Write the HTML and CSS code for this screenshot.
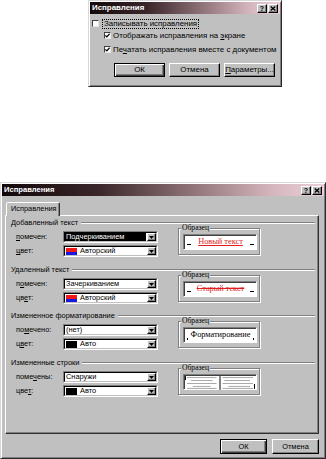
FILE: index.html
```html
<!DOCTYPE html>
<html lang="ru">
<head>
<meta charset="utf-8">
<title>Исправления</title>
<link rel="stylesheet" href="styles.css">
</head>
<body>
<div class="page">
  <section class="dlg dlg-small">
    <div class="titlebar">
      <span class="title">Исправления</span>
      <span class="tb-btns">
        <span class="tb-btn">?</span>
        <span class="tb-btn"><svg width="6" height="5" viewBox="0 0 6 5"><path d="M0.7 0.5L5.3 4.5M5.3 0.5L0.7 4.5" stroke="#000" stroke-width="1.3"/></svg></span>
      </span>
    </div>
    <div class="small-body">
      <div class="chk-row r1"><span class="chk"></span><span class="focus">Записывать исправления</span></div>
      <div class="chk-row r2"><span class="chk"><svg width="5" height="5" viewBox="0 0 5 5"><path d="M0.4 2.4L1.9 3.9L4.6 0.8" stroke="#000" stroke-width="1.3" fill="none"/></svg></span><span>Отображать исправления на <u>э</u>кране</span></div>
      <div class="chk-row r3"><span class="chk"><svg width="5" height="5" viewBox="0 0 5 5"><path d="M0.4 2.4L1.9 3.9L4.6 0.8" stroke="#000" stroke-width="1.3" fill="none"/></svg></span><span>Пе<u>ч</u>атать исправления вместе с документом</span></div>
      <div class="btn-row">
        <span class="btn btn-default">ОК</span>
        <span class="btn">Отмена</span>
        <span class="btn"><u>П</u>араметры...</span>
      </div>
    </div>
  </section>

  <section class="dlg dlg-big">
    <div class="titlebar">
      <span class="title">Исправления</span>
      <span class="tb-btns">
        <span class="tb-btn">?</span>
        <span class="tb-btn"><svg width="6" height="5" viewBox="0 0 6 5"><path d="M0.7 0.5L5.3 4.5M5.3 0.5L0.7 4.5" stroke="#000" stroke-width="1.3"/></svg></span>
      </span>
    </div>
    <div class="tabs"><span class="tab">Исправления</span></div>
    <div class="panel">
      <div class="sec s1">
        <div class="sec-head"><span>Добавленный текст</span><i class="etch"></i></div>
        <div class="sec-body">
          <div class="fields">
            <div class="frow"><span class="flabel"><u>п</u>омечен:</span>
              <div class="combo"><div class="combo-in"><span class="cval sel">Подчеркиванием</span><span class="cbtn"><svg width="5" height="3" viewBox="0 0 5 3"><path d="M0 0H5L2.5 3Z"/></svg></span></div></div>
            </div>
            <div class="frow"><span class="flabel"><u>ц</u>вет:</span>
              <div class="combo"><div class="combo-in"><span class="cval"><i class="sw sw-rb"></i>Авторский</span><span class="cbtn"><svg width="5" height="3" viewBox="0 0 5 3"><path d="M0 0H5L2.5 3Z"/></svg></span></div></div>
            </div>
          </div>
          <div class="sample">
            <span class="sample-label">Образец</span>
            <div class="sbox"><i class="mk"></i><span class="st st-new">Новый текст</span><i class="mk"></i></div>
          </div>
        </div>
      </div>

      <div class="sec s2">
        <div class="sec-head"><span>Удаленный текст</span><i class="etch"></i></div>
        <div class="sec-body">
          <div class="fields">
            <div class="frow"><span class="flabel">п<u>о</u>мечен:</span>
              <div class="combo"><div class="combo-in"><span class="cval">Зачеркиванием</span><span class="cbtn"><svg width="5" height="3" viewBox="0 0 5 3"><path d="M0 0H5L2.5 3Z"/></svg></span></div></div>
            </div>
            <div class="frow"><span class="flabel">цв<u>е</u>т:</span>
              <div class="combo"><div class="combo-in"><span class="cval"><i class="sw sw-rb"></i>Авторский</span><span class="cbtn"><svg width="5" height="3" viewBox="0 0 5 3"><path d="M0 0H5L2.5 3Z"/></svg></span></div></div>
            </div>
          </div>
          <div class="sample">
            <span class="sample-label">Образец</span>
            <div class="sbox"><i class="mk"></i><span class="st st-old">Старый текст</span><i class="mk"></i></div>
          </div>
        </div>
      </div>

      <div class="sec s3">
        <div class="sec-head"><span>Измененное форматирование</span><i class="etch"></i></div>
        <div class="sec-body">
          <div class="fields">
            <div class="frow"><span class="flabel">по<u>м</u>ечено:</span>
              <div class="combo"><div class="combo-in"><span class="cval">(нет)</span><span class="cbtn"><svg width="5" height="3" viewBox="0 0 5 3"><path d="M0 0H5L2.5 3Z"/></svg></span></div></div>
            </div>
            <div class="frow"><span class="flabel">ц<u>в</u>ет:</span>
              <div class="combo"><div class="combo-in"><span class="cval"><i class="sw sw-k"></i>Авто</span><span class="cbtn"><svg width="5" height="3" viewBox="0 0 5 3"><path d="M0 0H5L2.5 3Z"/></svg></span></div></div>
            </div>
          </div>
          <div class="sample">
            <span class="sample-label">Образец</span>
            <div class="sbox"><i class="dot"></i><span class="st st-fmt">Форматирование</span><i class="dot"></i></div>
          </div>
        </div>
      </div>

      <div class="sec s4">
        <div class="sec-head"><span>Измененные строки</span><i class="etch"></i></div>
        <div class="sec-body">
          <div class="fields">
            <div class="frow"><span class="flabel">поме<u>ч</u>ены:</span>
              <div class="combo"><div class="combo-in"><span class="cval">Снаружи</span><span class="cbtn"><svg width="5" height="3" viewBox="0 0 5 3"><path d="M0 0H5L2.5 3Z"/></svg></span></div></div>
            </div>
            <div class="frow"><span class="flabel">цве<u>т</u>:</span>
              <div class="combo"><div class="combo-in"><span class="cval"><i class="sw sw-k"></i>Авто</span><span class="cbtn"><svg width="5" height="3" viewBox="0 0 5 3"><path d="M0 0H5L2.5 3Z"/></svg></span></div></div>
            </div>
          </div>
          <div class="sample">
            <span class="sample-label">Образец</span>
            <div class="sbox sbox-lines">
              <svg width="72" height="14" viewBox="0 0 72 14">
                <g stroke="#a8a8a8" stroke-width="1">
                  <path d="M2 1.5H32M6 4.5H28M2 7.5H32M8 10.5H26M2 12.5H32"/>
                  <path d="M38 1.5H69M40 4.5H66M38 7.5H69M44 10.5H66M38 12.5H69"/>
                </g>
                <path d="M35.5 0V14" stroke="#000" stroke-width="1"/>
                <path d="M0.5 0V4" stroke="#000" stroke-width="1"/>
                <path d="M70.5 8V13" stroke="#000" stroke-width="1"/>
              </svg>
            </div>
          </div>
        </div>
      </div>
    </div>
    <div class="dlg-btns">
      <span class="btn btn-default">ОК</span>
      <span class="btn">Отмена</span>
    </div>
  </section>
</div>
</body>
</html>
```
FILE: styles.css
```css
* { box-sizing: border-box; }
html, body { margin: 0; padding: 0; background: #fff; }
body {
  width: 326px;
  height: 459px;
  overflow: hidden;
  font-family: "Liberation Sans", Arial, sans-serif;
  font-size: 7.4px;
  line-height: 1;
  color: #000;
}
u { text-decoration: underline; text-underline-offset: 1px; }
i { display: block; font-style: normal; }

.page { display: flex; flex-direction: column; align-items: flex-start; }

.dlg {
  background: #c0c0c0;
  border: 1px solid;
  border-color: #d8d8d8 #282828 #282828 #d8d8d8;
  box-shadow: inset 1px 1px 0 #fff, inset -1px -1px 0 #808080;
  padding: 1px;
  display: flex;
  flex-direction: column;
}
.dlg-small { margin-left: 88px; width: 194px; height: 87px; font-size: 7.9px; }
.dlg-big { margin-top: 95px; width: 326px; height: 277px; }

.titlebar {
  flex: none;
  height: 12px;
  display: flex;
  align-items: center;
  justify-content: space-between;
  padding: 0 2px 0 2px;
  background: linear-gradient(90deg, #120809 0%, #3a262a 30%, #8c7076 58%, #d6b6be 84%, #ecd0d7 100%);
}
.title { color: #fff; font-weight: bold; font-size: 7.6px; }
.dlg-small .title { font-size: 7.9px; }
.tb-btns { display: flex; gap: 1px; }
.tb-btn {
  width: 10px;
  height: 9px;
  background: #c0c0c0;
  border: 1px solid;
  border-color: #fff #000 #000 #fff;
  box-shadow: inset -1px -1px 0 #808080;
  display: flex;
  align-items: center;
  justify-content: center;
  font-weight: bold;
  font-size: 7px;
}

/* small dialog */
.small-body { display: flex; flex-direction: column; padding-left: 2px; }
.chk-row { display: flex; align-items: center; height: 9px; gap: 3px; }
.r1 { margin-top: 5px; }
.r2 { margin-top: 3px; padding-left: 12px; gap: 2px; }
.r3 { margin-top: 5px; padding-left: 12px; gap: 2px; }
.chk {
  flex: none;
  width: 7px;
  height: 7px;
  background: #fff;
  border: 1px solid;
  border-color: #404040 #e8e8e8 #e8e8e8 #404040;
  display: flex;
  align-items: center;
  justify-content: center;
}
.focus {
  display: flex;
  align-items: center;
  height: 10px;
  padding: 0 1px;
  border: 1px dotted #000;
}

.btn-row { display: flex; gap: 4px; margin-top: 9px; padding-left: 22px; }
.btn {
  width: 51px;
  height: 14px;
  background: #c0c0c0;
  border: 1px solid;
  border-color: #fff #000 #000 #fff;
  box-shadow: inset -1px -1px 0 #808080;
  display: flex;
  align-items: center;
  justify-content: center;
}
.btn-default {
  border-color: #000;
  box-shadow: inset 1px 1px 0 #fff, inset -1px -1px 0 #404040, inset -2px -2px 0 #808080;
}

/* big dialog */
.tabs { display: flex; margin: 6px 0 0 4px; }
.tab {
  position: relative;
  z-index: 1;
  height: 14px;
  width: 54px;
  margin-bottom: -1px;
  background: #c0c0c0;
  border: 1px solid;
  border-bottom: none;
  border-color: #fff #303030 transparent #fff;
  border-radius: 2px 2px 0 0;
  box-shadow: inset -1px 0 0 #808080;
  padding: 0 0 1px 4px;
  display: flex;
  align-items: center;
}
.panel {
  margin-left: 3px;
  width: 314px;
  height: 219px;
  border: 1px solid;
  border-color: #fff #303030 #303030 #fff;
  box-shadow: inset -1px -1px 0 #808080;
  padding: 2px 2px 0 5px;
}

.sec { display: flex; flex-direction: column; }
.s1 { height: 47px; }
.s2 { height: 46px; }
.s3 { height: 47px; }
.sec-head { height: 9px; display: flex; align-items: center; gap: 3px; padding-right: 1px; }
.etch { flex: 1; height: 2px; border-top: 1px solid #808080; border-bottom: 1px solid #fff; }
.sec-body { display: flex; align-items: flex-start; }
.fields { display: flex; flex-direction: column; gap: 2px; padding: 4px 0 0 5px; }
.frow { display: flex; align-items: center; height: 12px; }
.flabel { width: 47px; }

.combo {
  width: 95px;
  height: 12px;
  display: flex;
  border: 1px solid;
  border-color: #808080 #fff #fff #808080;
}
.combo-in {
  flex: 1;
  display: flex;
  background: #fff;
  border: 1px solid;
  border-color: #000 #c0c0c0 #c0c0c0 #000;
}
.cval { flex: 1; display: flex; align-items: center; padding-left: 1px; gap: 3px; }
.cval.sel { background: #000; color: #fff; margin: 0 1px 0 0; }
.cbtn {
  flex: none;
  width: 9px;
  background: #c0c0c0;
  border: 1px solid;
  border-color: #fff #000 #000 #fff;
  box-shadow: inset -1px -1px 0 #808080;
  display: flex;
  align-items: center;
  justify-content: center;
}
.sw { width: 11px; height: 7px; }
.sw-rb { background: linear-gradient(#f01818 0 50%, #1818e0 50% 100%); }
.sw-k { background: #000; }

.sample {
  position: relative;
  margin: 1px 0 0 20px;
  width: 82px;
  height: 27px;
  border: 1px solid #808080;
  box-shadow: inset 1px 1px 0 #fff, 1px 1px 0 #fff;
  padding: 5px 2px 0 4px;
}
.sample-label {
  position: absolute;
  left: 2px;
  top: -5px;
  padding: 0 1px;
  background: #c0c0c0;
  font-family: "Liberation Serif", "Times New Roman", serif;
  font-size: 7.6px;
}
.sbox {
  width: 74px;
  height: 16px;
  background: #fff;
  border: 1px solid;
  border-color: #808080 #fff #fff #808080;
  box-shadow: inset 1px 1px 0 #404040;
  display: flex;
  align-items: center;
  justify-content: space-between;
  padding: 1px 2px 0 3px;
}
.sbox-lines { padding: 1px 0 0 1px; }
.mk { width: 4px; height: 1px; background: #000; margin-top: 3px; }
.dot { width: 1px; height: 2px; background: #000; margin-top: 6px; }
.st { font-family: "Liberation Serif", "Times New Roman", serif; font-size: 8.3px; }
.st-new { color: #e01c1c; text-decoration: underline; }
.st-old { color: #e01c1c; text-decoration: line-through; }
.st-fmt { color: #000; }

.dlg-btns { display: flex; justify-content: flex-end; gap: 5px; margin-top: 5px; padding-right: 5px; }
.dlg-btns .btn { width: 47px; height: 15px; }
```
